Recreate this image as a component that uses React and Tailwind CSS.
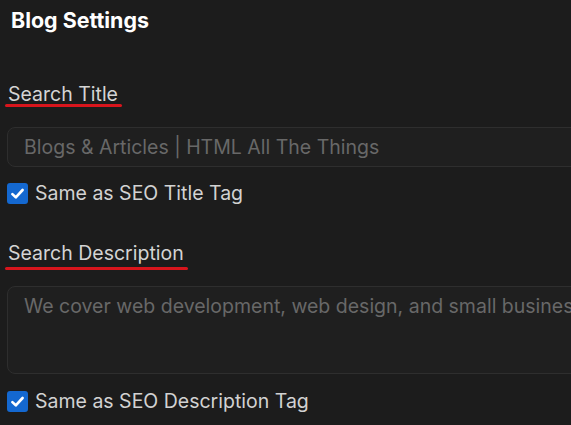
import React from 'react';

const Checkbox = () => (
  <span className="ml-[2px] flex h-[21px] w-[21px] shrink-0 items-center justify-center rounded-[3px] bg-[#1468d0]">
    <svg viewBox="0 0 16 16" className="h-[17px] w-[17px]" fill="none" stroke="white" strokeWidth="2.5" strokeLinecap="round" strokeLinejoin="round">
      <path d="M3.2 8.6 6.4 11.6 12.8 4.7" />
    </svg>
  </span>
);

const FieldLabel = ({ children, gap }) => (
  <div className="inline-flex flex-col">
    <span className="pl-[3px] pr-[4px] text-[19.5px] leading-[22px] text-[#d4d4d4]">{children}</span>
    <span className={`h-[3px] rounded-full bg-[#d8151c] ${gap}`} />
  </div>
);

const SameAs = ({ label }) => (
  <label className="flex h-[22px] items-center gap-[7px]">
    <Checkbox />
    <span className="text-[19.5px] leading-[22px] text-[#d2d2d2]">{label}</span>
  </label>
);

export default function App() {
  return (
    <div className="min-h-[425px] w-[571px] overflow-hidden bg-[#1c1c1c] pl-[5px] font-['Inter',sans-serif]">
      <h1 className="pl-[6px] pt-[6px] text-[21.4px] font-bold leading-[28px] text-white">Blog Settings</h1>

      <div className="mt-[49px]">
        <FieldLabel gap="-mt-px">Search Title</FieldLabel>
        <div className="ml-[2px] mt-[20px] flex h-[40px] w-[620px] items-center rounded-lg border border-[#2e2e2e] bg-[#1f1f1f] pl-[16px] text-[19.5px] leading-[22px] text-[#686868]">
          Blogs &amp; Articles | HTML All The Things
        </div>
        <div className="mt-[15px]">
          <SameAs label="Same as SEO Title Tag" />
        </div>
      </div>

      <div className="mt-[38px]">
        <FieldLabel gap="mt-[3px]">Search Description</FieldLabel>
        <div className="ml-[2px] mt-[16px] h-[88px] w-[620px] overflow-hidden whitespace-nowrap rounded-lg border border-[#2e2e2e] bg-[#1f1f1f] pl-[16px] pt-[8px] text-[19.5px] leading-[22px] text-[#686868]">
          We cover web development, web design, and small business topics
        </div>
        <div className="mt-[16px]">
          <SameAs label="Same as SEO Description Tag" />
        </div>
      </div>
    </div>
  );
}
